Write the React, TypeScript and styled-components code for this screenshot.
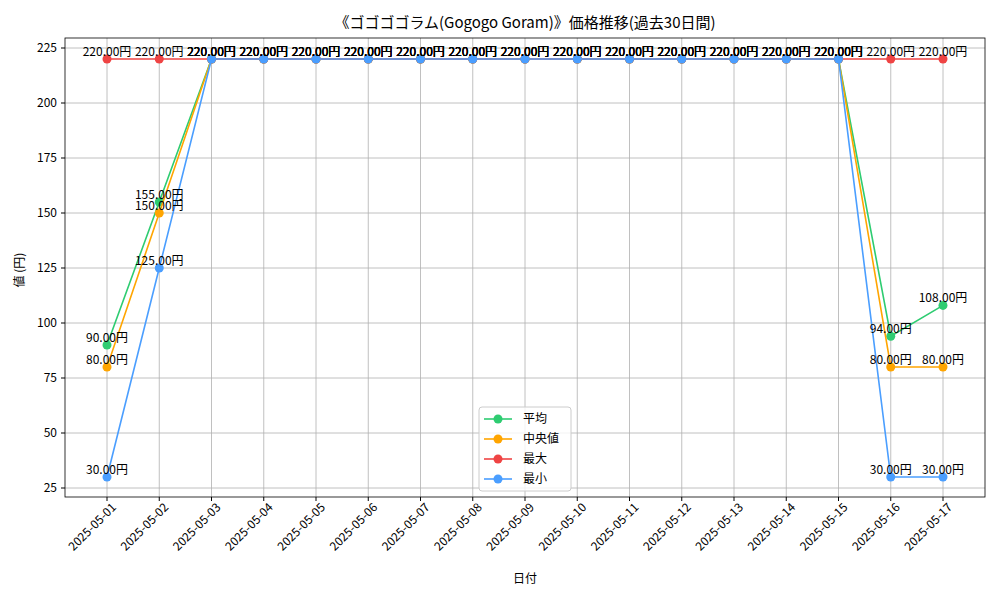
import React from "react";
import styled, { createGlobalStyle } from "styled-components";

const Global = createGlobalStyle`
  body { margin: 0; background: #fff; }
`;
const Page = styled.div`
  width: 1000px; height: 600px; background: #fff;
`;
const Chart = styled.svg`
  display: block;
  font-family: "Noto Sans CJK JP", "DejaVu Sans", sans-serif;
`;

const dates = Array.from({ length: 17 }, (_, i) => `2025-05-${String(i + 1).padStart(2, "0")}`);
const full = (a: number[], b: number[]) => [...a, ...Array(17 - a.length - b.length).fill(220), ...b];
const series = [
  { name: "平均", color: "#2ecc71", data: full([90, 155], [94, 108]) },
  { name: "中央値", color: "#ffa500", data: full([80, 150], [80, 80]) },
  { name: "最大", color: "#ef4444", data: full([220, 220], [220, 220]) },
  { name: "最小", color: "#4a9eff", data: full([30, 125], [30, 30]) },
];
const X = (i: number) => 107 + i * 52.25;
const Y = (v: number) => 488 - (v - 25) * 2.2;
const yt = [25, 50, 75, 100, 125, 150, 175, 200, 225];

export default function App() {
  return (
    <Page>
      <Global />
      <Chart width={1000} height={600}>
        <text x={525} y={28} fontSize={15} textAnchor="middle">《ゴゴゴゴラム(Gogogo Goram)》価格推移(過去30日間)</text>
        {dates.map((_, i) => (
          <line key={i} x1={X(i)} x2={X(i)} y1={38} y2={497} stroke="#b0b0b0" strokeWidth={0.8} />
        ))}
        {yt.map((v) => (
          <line key={v} x1={65} x2={985} y1={Y(v)} y2={Y(v)} stroke="#b0b0b0" strokeWidth={0.8} />
        ))}
        <rect x={65} y={38} width={920} height={459} fill="none" stroke="#000" strokeWidth={0.8} />
        {yt.map((v) => (
          <g key={v}>
            <line x1={61} x2={65} y1={Y(v)} y2={Y(v)} stroke="#000" />
            <text x={57} y={Y(v) + 4} fontSize={12} textAnchor="end">{v}</text>
          </g>
        ))}
        {dates.map((d, i) => (
          <g key={d}>
            <line x1={X(i)} x2={X(i)} y1={497} y2={501} stroke="#000" />
            <text x={X(i) + 10} y={508} fontSize={12} textAnchor="end" transform={`rotate(-45 ${X(i) + 10} 508)`}>{d}</text>
          </g>
        ))}
        <text x={525} y={583} fontSize={12} textAnchor="middle">日付</text>
        <text x={24} y={270} fontSize={12} textAnchor="middle" transform="rotate(-90 24 270)">値 (円)</text>
        {series.map((s) => (
          <g key={s.name}>
            <polyline fill="none" stroke={s.color} strokeWidth={1.6}
              points={s.data.map((v, i) => `${X(i)},${Y(v)}`).join(" ")} />
            {s.data.map((v, i) => (
              <circle key={i} cx={X(i)} cy={Y(v)} r={4.5} fill={s.color} />
            ))}
          </g>
        ))}
        {series.map((s) => s.data.map((v, i) => (
          <text key={s.name + i} x={X(i)} y={Y(v) - 3} fontSize={12} textAnchor="middle">{v.toFixed(2)}円</text>
        )))}
        <rect x={479} y={407} width={92} height={84} rx={3} fill="#fff" fillOpacity={0.8} stroke="#ccc" />
        {series.map((s, k) => (
          <g key={s.name}>
            <line x1={484} x2={512} y1={419 + k * 20} y2={419 + k * 20} stroke={s.color} strokeWidth={1.6} />
            <circle cx={498} cy={419 + k * 20} r={4.5} fill={s.color} />
            <text x={523} y={423 + k * 20} fontSize={12}>{s.name}</text>
          </g>
        ))}
      </Chart>
    </Page>
  );
}
